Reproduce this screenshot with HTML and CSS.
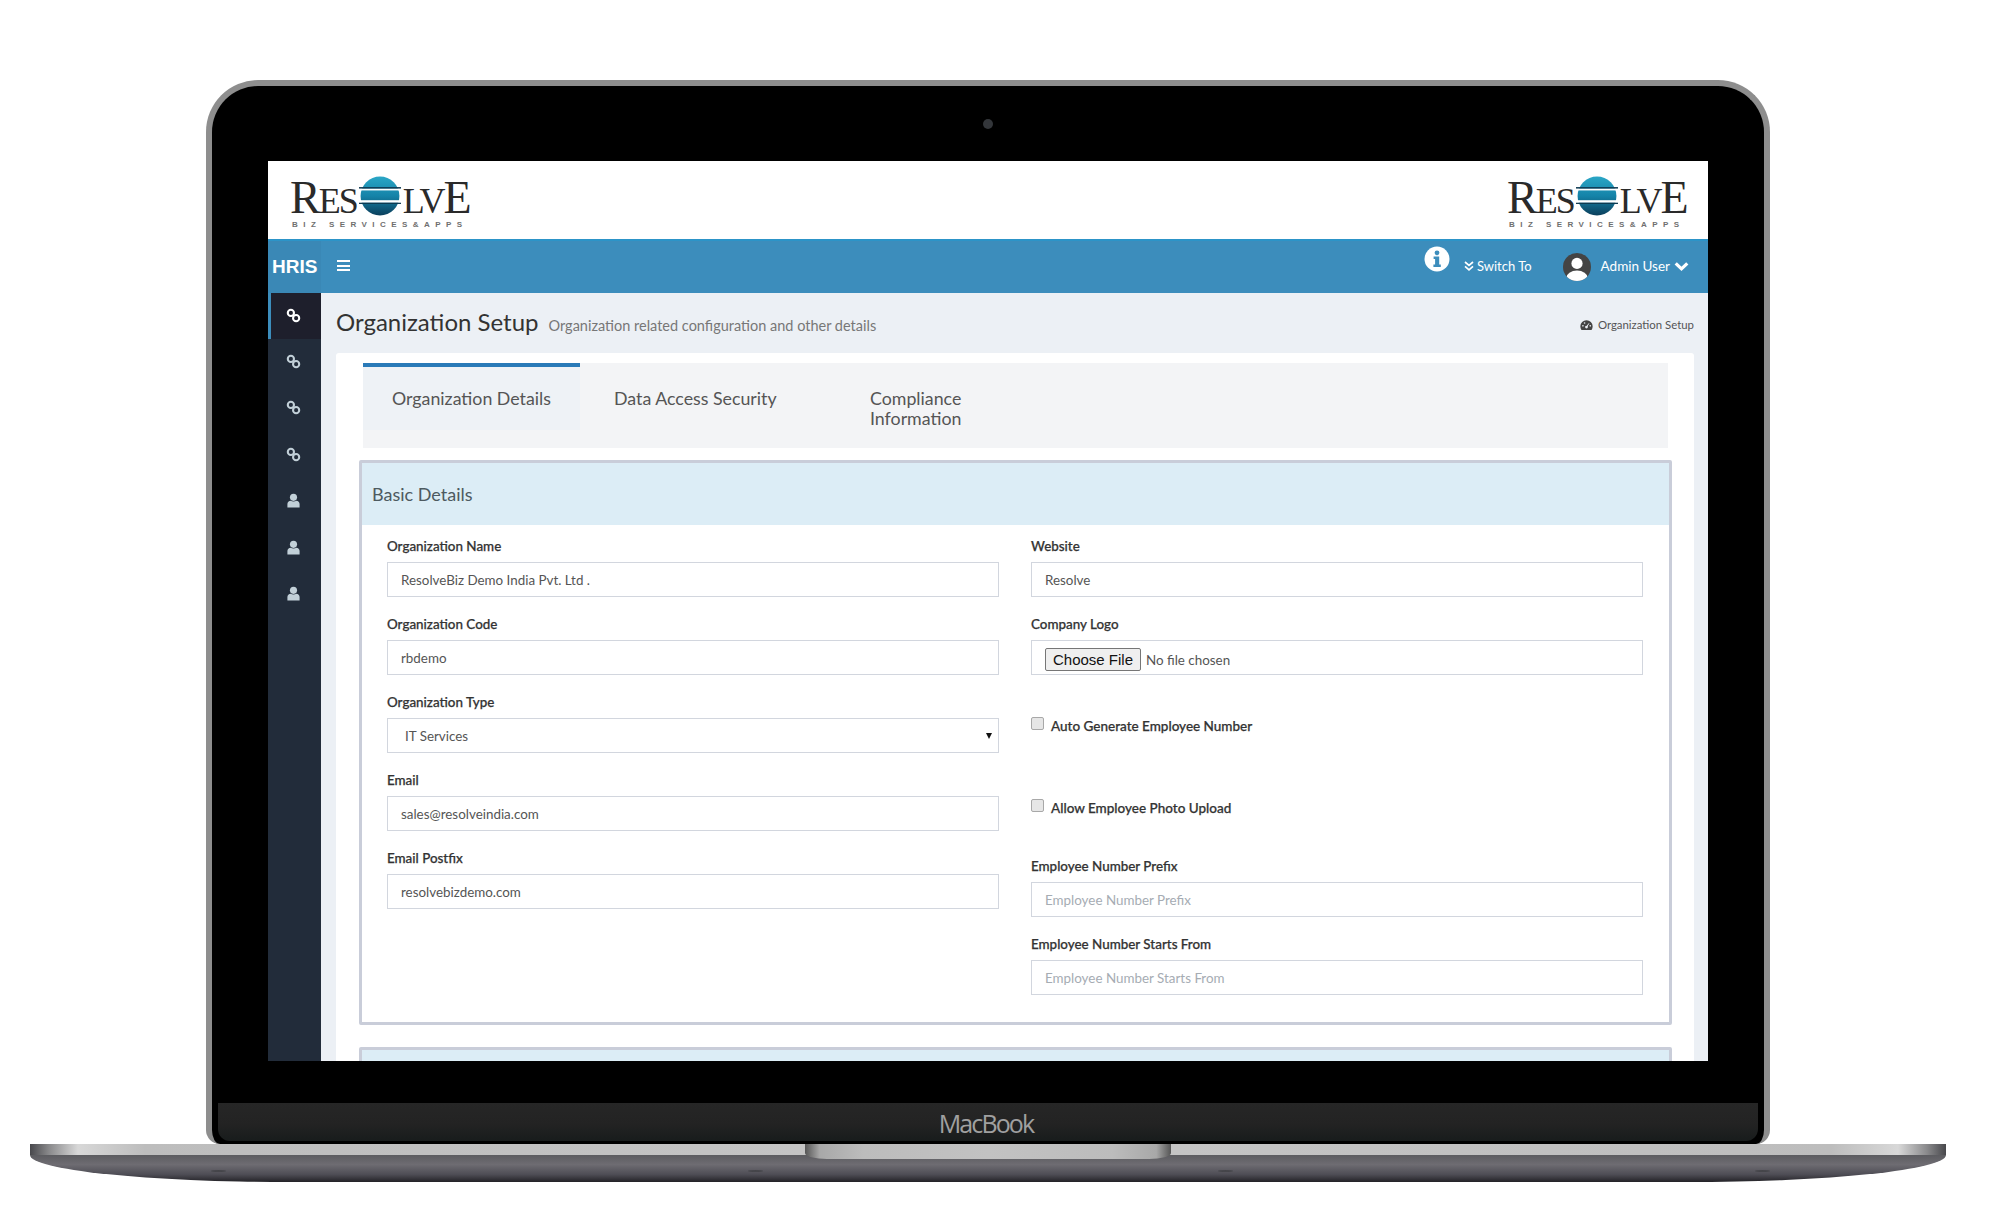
FILE: index.html
```html
<!DOCTYPE html>
<html lang="en">
<head>
    <meta charset="UTF-8">
    <meta name="viewport" content="width=device-width, initial-scale=1.0">
    <title>Organization Setup</title>
    <link rel="stylesheet" href="styles.css">
</head>
<body>
    <svg class="defs" width="0" height="0">
        <defs>
            <linearGradient id="globeFill" x1="0" y1="0" x2="0" y2="1">
                <stop offset="0" stop-color="#2aa6c6"/>
                <stop offset="0.5" stop-color="#1583a8"/>
                <stop offset="1" stop-color="#0b3f5c"/>
            </linearGradient>
            <symbol id="globe" viewBox="0 0 40 40">
                <circle cx="20" cy="20" r="18.5" fill="url(#globeFill)"/>
                <rect x="0" y="11.5" width="40" height="1.6" fill="#0d3a52"/>
                <rect x="0" y="13.1" width="40" height="1.6" fill="#ffffff"/>
                <rect x="0" y="24" width="40" height="2.4" fill="#ffffff"/>
                <rect x="0" y="26.4" width="40" height="1.2" fill="#0d3a52"/>
            </symbol>
            <symbol id="link" viewBox="0 0 16 16">
                <circle cx="5.2" cy="5.2" r="3.3" fill="none" stroke="currentColor" stroke-width="2.2"/>
                <circle cx="10.8" cy="10.8" r="3.3" fill="none" stroke="currentColor" stroke-width="2.2"/>
            </symbol>
            <symbol id="user" viewBox="0 0 16 16">
                <circle cx="8" cy="4.6" r="3.8" fill="currentColor"/>
                <path d="M1.5 15.5v-3.7c0-2 1.6-3.4 3.4-3.6 1.8 1 4.4 1 6.2 0 1.8.2 3.4 1.6 3.4 3.6v3.7z" fill="currentColor"/>
            </symbol>
        </defs>
    </svg>

    <div class="laptop">
        <div class="lid">
            <div class="bezel-top"><span class="camera"></span></div>

            <div class="screen">
                <div class="logo-bar">
                    <div class="logo">
                        <div class="logo-word">
                            <span class="cap">R</span><span>ES</span>
                            <svg class="logo-globe"><use href="#globe"/></svg>
                            <span>LV</span><span class="cap">E</span>
                        </div>
                        <div class="logo-sub">BIZ SERVICES&amp;APPS</div>
                    </div>
                    <div class="logo">
                        <div class="logo-word">
                            <span class="cap">R</span><span>ES</span>
                            <svg class="logo-globe"><use href="#globe"/></svg>
                            <span>LV</span><span class="cap">E</span>
                        </div>
                        <div class="logo-sub">BIZ SERVICES&amp;APPS</div>
                    </div>
                </div>

                <div class="topbar">
                    <div class="brand">HRIS</div>
                    <div class="burger"><i></i><i></i><i></i></div>
                    <div class="topbar-right">
                        <svg class="info-icon" viewBox="0 0 26 26">
                            <circle cx="13" cy="13" r="12.5" fill="#fff"/>
                            <circle cx="13" cy="6.8" r="2.4" fill="#3c8dbc"/>
                            <path d="M9.6 10.6h5.6v8h1.6v2.4H9.4v-2.4h1.7v-5.6H9.6z" fill="#3c8dbc"/>
                        </svg>
                        <div class="switch-to">
                            <svg class="double-chevron" viewBox="0 0 10 10">
                                <path d="M1 1l4 3.4L9 1M1 5.4l4 3.4 4-3.4" fill="none" stroke="#fff" stroke-width="1.7"/>
                            </svg>
                            <span>Switch To</span>
                        </div>
                        <svg class="avatar" viewBox="0 0 28 28">
                            <defs><clipPath id="avatarClip"><circle cx="14" cy="14" r="14"/></clipPath></defs>
                            <circle cx="14" cy="14" r="14" fill="#444"/>
                            <g clip-path="url(#avatarClip)" fill="#fff">
                                <circle cx="14" cy="10.4" r="5.6"/>
                                <ellipse cx="14" cy="24.6" rx="10.6" ry="7"/>
                            </g>
                        </svg>
                        <div class="admin-user">
                            <span>Admin User</span>
                            <svg class="chevron" viewBox="0 0 14 10">
                                <path d="M1.6 2l5.4 5.2L12.4 2" fill="none" stroke="#fff" stroke-width="3"/>
                            </svg>
                        </div>
                    </div>
                </div>

                <div class="app-body">
                    <div class="sidebar">
                        <div class="side-item active"><svg class="side-icon"><use href="#link"/></svg></div>
                        <div class="side-item"><svg class="side-icon"><use href="#link"/></svg></div>
                        <div class="side-item"><svg class="side-icon"><use href="#link"/></svg></div>
                        <div class="side-item"><svg class="side-icon"><use href="#link"/></svg></div>
                        <div class="side-item"><svg class="side-icon"><use href="#user"/></svg></div>
                        <div class="side-item"><svg class="side-icon"><use href="#user"/></svg></div>
                        <div class="side-item"><svg class="side-icon"><use href="#user"/></svg></div>
                    </div>

                    <div class="content">
                        <div class="page-head">
                            <h1 class="page-title">Organization Setup</h1>
                            <span class="page-sub">Organization related configuration and other details</span>
                            <div class="crumb">
                                <svg class="crumb-icon" viewBox="0 0 16 14">
                                    <path d="M8 1a7.6 7.6 0 0 0-7.6 7.6c0 1.7.5 3.2 1.4 4.4h12.4c.9-1.2 1.4-2.7 1.4-4.4A7.6 7.6 0 0 0 8 1z" fill="#444"/>
                                    <circle cx="8" cy="9.6" r="1.7" fill="#ecf0f5"/>
                                    <path d="M8 9.6l3-4.6" stroke="#ecf0f5" stroke-width="1.2"/>
                                    <circle cx="3.6" cy="8" r="1" fill="#ecf0f5"/>
                                    <circle cx="5.6" cy="4.6" r="1" fill="#ecf0f5"/>
                                    <circle cx="12.6" cy="8" r="1" fill="#ecf0f5"/>
                                </svg>
                                <span>Organization Setup</span>
                            </div>
                        </div>

                        <div class="sheet">
                            <div class="tabs">
                                <div class="tab tab-first active">Organization Details</div>
                                <div class="tab tab-second">Data Access Security</div>
                                <div class="tab tab-third">Compliance Information</div>
                            </div>

                            <div class="panel">
                                <div class="panel-head">Basic Details</div>
                                <div class="form-grid">
                                    <div class="form-col">
                                        <div class="field">
                                            <label class="field-label">Organization Name</label>
                                            <input class="field-input" type="text" value="ResolveBiz Demo India Pvt. Ltd .">
                                        </div>
                                        <div class="field">
                                            <label class="field-label">Organization Code</label>
                                            <input class="field-input" type="text" value="rbdemo">
                                        </div>
                                        <div class="field">
                                            <label class="field-label">Organization Type</label>
                                            <div class="select-wrap">
                                                <select class="field-input field-select">
                                                    <option>IT Services</option>
                                                </select>
                                            </div>
                                        </div>
                                        <div class="field">
                                            <label class="field-label">Email</label>
                                            <input class="field-input" type="text" value="sales@resolveindia.com">
                                        </div>
                                        <div class="field">
                                            <label class="field-label">Email Postfix</label>
                                            <input class="field-input" type="text" value="resolvebizdemo.com">
                                        </div>
                                    </div>
                                    <div class="form-col">
                                        <div class="field">
                                            <label class="field-label">Website</label>
                                            <input class="field-input" type="text" value="Resolve">
                                        </div>
                                        <div class="field">
                                            <label class="field-label">Company Logo</label>
                                            <input class="field-input field-file" type="file">
                                        </div>
                                        <div class="check-row">
                                            <input class="check-box" type="checkbox">
                                            <span class="check-label">Auto Generate Employee Number</span>
                                        </div>
                                        <div class="check-row">
                                            <input class="check-box" type="checkbox">
                                            <span class="check-label">Allow Employee Photo Upload</span>
                                        </div>
                                        <div class="field">
                                            <label class="field-label">Employee Number Prefix</label>
                                            <input class="field-input" type="text" placeholder="Employee Number Prefix">
                                        </div>
                                        <div class="field">
                                            <label class="field-label">Employee Number Starts From</label>
                                            <input class="field-input" type="text" placeholder="Employee Number Starts From">
                                        </div>
                                    </div>
                                </div>
                            </div>

                            <div class="panel panel-next">
                                <div class="panel-head"></div>
                            </div>
                        </div>
                    </div>
                </div>
            </div>

            <div class="bezel-bottom"></div>
            <div class="chin">MacBook</div>
        </div>

        <div class="base">
            <div class="base-top"></div>
            <div class="base-bottom"></div>
            <div class="notch"></div>
            <span class="foot foot-1"></span>
            <span class="foot foot-2"></span>
            <span class="foot foot-3"></span>
            <span class="foot foot-4"></span>
        </div>
    </div>
</body>
</html>
```

FILE: styles.css
```css
* {
    box-sizing: border-box;
}
html, body {
    margin: 0;
    background-color: #ffffff;
}
body {
    height: 1228px;
    overflow: hidden;
    font-family: Lato, "Open Sans", sans-serif;
    color: #333;
}
.defs {
    display: block;
    height: 0;
}

/* Laptop */
.laptop {
    width: 1916px;
    margin-left: 30px;
    padding-top: 80px;
}
.lid {
    width: 1564px;
    height: 1064px;
    margin-left: 176px;
    background-color: #000;
    border: 6px solid #8e8e8e;
    border-bottom: none;
    border-radius: 52px 52px 14px 14px;
}
.bezel-top {
    height: 75px;
    display: flex;
    align-items: center;
    justify-content: center;
}
.camera {
    width: 10px;
    height: 10px;
    border-radius: 50%;
    background-color: #33363a;
}
.screen {
    width: 1440px;
    height: 900px;
    margin-left: 56px;
    background-color: #fff;
    overflow: hidden;
    display: flex;
    flex-direction: column;
}
.bezel-bottom {
    height: 42px;
}
.chin {
    width: 1540px;
    height: 38px;
    margin-left: 6px;
    padding-right: 4px;
    background: linear-gradient(#262626 0, #232323 55%, #181c1c 100%);
    border-radius: 0 0 12px 12px;
    color: #a0a0a0;
    font-family: "Open Sans", sans-serif;
    font-size: 25px;
    letter-spacing: -1.9px;
    line-height: 40px;
    text-align: center;
}
.base {
    position: relative;
    height: 38px;
}
.base-top {
    height: 11px;
    background: linear-gradient(90deg, #48484c 0, #8a8a8c 1%, #d8d8d8 2.5%, #bdbdbd 6%, #c6c6c6 50%, #bdbdbd 94%, #d8d8d8 97.5%, #8a8a8c 99%, #48484c 100%);
}
.base-bottom {
    height: 27px;
    background: linear-gradient(#5c5c60 0, #6e6c72 35%, #4e4d55 72%, #232227 100%);
    border-radius: 0 0 260px 260px / 0 0 27px 27px;
}
.notch {
    position: absolute;
    top: 0;
    left: 775px;
    width: 366px;
    height: 15px;
    background: linear-gradient(90deg, #555 0, #a8a8a8 4%, #bcbcbc 16%, #c2c2c2 50%, #bcbcbc 84%, #a8a8a8 96%, #555 100%);
    border-radius: 0 0 22px 22px / 0 0 6px 6px;
}
.foot {
    position: absolute;
    top: 26px;
    width: 15px;
    height: 2px;
    border-radius: 50%;
    background-color: #45454a;
}
.foot-1 { left: 181px; }
.foot-2 { left: 718px; }
.foot-3 { left: 1188px; }
.foot-4 { left: 1725px; }

/* Logo */
.logo-bar {
    height: 78px;
    flex: none;
    display: flex;
    justify-content: space-between;
    padding: 18px 26px 0 22px;
}
.logo {
    width: 175px;
}
.logo-word {
    display: flex;
    align-items: baseline;
    height: 44px;
    font-family: "Liberation Serif", serif;
    font-size: 36px;
    line-height: 38px;
    letter-spacing: -2px;
    color: #2a2a2a;
}
.logo-word .cap {
    font-size: 46px;
}
.logo-globe {
    width: 42px;
    height: 42px;
    margin: -4px 2px 0 2px;
    align-self: flex-start;
    flex: none;
}
.logo-sub {
    margin: -3px 0 0 2px;
    font-family: "Liberation Sans", sans-serif;
    font-size: 8px;
    font-weight: 700;
    letter-spacing: 5.45px;
    line-height: 10px;
    white-space: nowrap;
    color: #6f6f6f;
}

/* Top bar */
.topbar {
    height: 54px;
    flex: none;
    display: flex;
    align-items: center;
    background-color: #3c8dbc;
    border-top: 2px solid #2c94c8;
    color: #fff;
}
.brand {
    width: 53px;
    height: 100%;
    padding-left: 4px;
    font-family: "Liberation Sans", sans-serif;
    font-size: 19px;
    font-weight: 700;
    line-height: 51px;
    background-color: #3a88b6;
}
.burger {
    margin-left: 16px;
    width: 13px;
}
.burger i {
    display: block;
    height: 2px;
    margin-bottom: 2.5px;
    background-color: #fff;
}
.topbar-right {
    margin-left: auto;
    display: flex;
    align-items: center;
    padding-right: 19px;
    font-size: 13.5px;
}
.info-icon {
    width: 26px;
    height: 26px;
    margin-top: -17px;
    margin-right: 14px;
}
.switch-to {
    display: flex;
    align-items: center;
    gap: 3px;
    margin-top: -2px;
    margin-right: 31px;
    font-size: 13px;
}
.double-chevron {
    width: 10px;
    height: 10px;
}
.avatar {
    width: 28px;
    height: 28px;
    margin-right: 10px;
}
.admin-user {
    display: flex;
    align-items: center;
    gap: 4px;
    margin-top: -2px;
}
.chevron {
    width: 15px;
    height: 11px;
}

/* Sidebar */
.app-body {
    flex: 1;
    display: flex;
    min-height: 0;
}
.sidebar {
    width: 53px;
    flex: none;
    padding-right: 3px;
    background-color: #222c3a;
}
.side-item {
    height: 46.4px;
    display: flex;
    align-items: center;
    justify-content: center;
    color: #c2d0d8;
    margin-right: -3px;
    padding-right: 3px;
}
.side-item.active {
    background-color: #1e1f2c;
    border-left: 3px solid #3c8dbc;
    padding-right: 6px;
    color: #fff;
}
.side-icon {
    width: 15px;
    height: 15px;
    margin-top: -2px;
}

/* Content */
.content {
    flex: 1;
    min-width: 0;
    background-color: #ecf0f5;
    padding: 0 14px 0 15px;
}
.page-head {
    height: 60px;
    display: flex;
    align-items: center;
    padding-bottom: 3px;
}
.page-title {
    margin: 0;
    font-size: 24px;
    font-weight: 400;
    color: #333;
}
.page-sub {
    margin-left: 10px;
    margin-top: 7px;
    font-size: 14.5px;
    color: #777;
}
.crumb {
    margin-left: auto;
    margin-top: 6px;
    display: flex;
    align-items: center;
    gap: 5px;
    font-size: 11.4px;
    color: #555;
}
.crumb-icon {
    width: 13px;
    height: 12px;
}
.sheet {
    height: 708px;
    background-color: #fff;
    padding: 10px 22px 0 23px;
    border-radius: 3px 3px 0 0;
    overflow: hidden;
}

/* Tabs */
.tabs {
    height: 85px;
    margin: 0 4px 12px 4px;
    display: flex;
    align-items: flex-start;
    background-color: #f3f4f6;
    font-size: 17.8px;
    line-height: 20px;
    color: #555;
}
.tab {
    height: 67px;
    padding-top: 25px;
}
.tab-first {
    width: 217px;
    padding-left: 29px;
}
.tab-first.active {
    background-color: #eef2f6;
    border-top: 4px solid #2a7ab8;
    padding-top: 21px;
}
.tab-second {
    width: 256px;
    padding-left: 34px;
}
.tab-third {
    width: 131px;
    padding-left: 34px;
}

/* Panels */
.panel {
    height: 565px;
    border: 3px solid #c9cdd9;
    border-radius: 2px;
    margin-bottom: 22px;
}
.panel-head {
    height: 62px;
    padding-left: 10px;
    font-size: 18px;
    line-height: 62px;
    background-color: #dcedf6;
    color: #4d5a60;
}
.form-grid {
    display: grid;
    grid-template-columns: 612px 612px;
    column-gap: 32px;
    padding: 12px 0 0 25px;
}
.field {
    height: 78px;
}
.field-label {
    display: block;
    height: 18px;
    margin-bottom: 7px;
    font-size: 13.4px;
    font-weight: 500;
    -webkit-text-stroke: 0.25px #333;
    line-height: 18px;
    color: #333;
}
.field-input {
    display: block;
    width: 100%;
    height: 35px;
    padding: 0 13px;
    border: 1px solid #d2d6de;
    background-color: #fff;
    font-family: Lato, sans-serif;
    font-size: 13.4px;
    color: #555;
}
.field-input::placeholder {
    color: #a6acb3;
}
.select-wrap {
    position: relative;
}
.select-wrap::after {
    content: "";
    position: absolute;
    top: 15px;
    right: 7px;
    border-left: 3px solid transparent;
    border-right: 3px solid transparent;
    border-top: 6px solid #111;
}
.field-select {
    appearance: none;
    padding-left: 17px;
}
.field-file {
    padding: 7px 13px;
    line-height: 21px;
    color: #555;
}
.field-file::file-selector-button {
    width: 96px;
    height: 23px;
    margin-right: 5px;
    padding: 0;
    font-family: "Liberation Sans", sans-serif;
    font-size: 15px;
    color: #111;
    background-color: #efefef;
    border: 1px solid #767676;
    border-radius: 2px;
}
.check-row {
    height: 82px;
    display: flex;
    align-items: flex-start;
    gap: 7px;
    padding-top: 24px;
}
.check-box {
    appearance: none;
    width: 13px;
    height: 13px;
    margin: 0;
    background-color: #e6e6e6;
    border: 1px solid #a8a8a8;
    border-radius: 2px;
}
.check-label {
    margin-top: 0;
    font-size: 13.5px;
    font-weight: 500;
    -webkit-text-stroke: 0.25px #333;
    line-height: 18px;
    color: #333;
}
.panel-next {
    height: 40px;
}
```
